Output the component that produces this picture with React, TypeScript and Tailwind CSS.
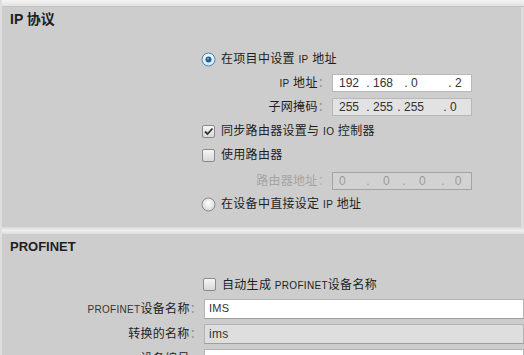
import React from "react";

const font = "font-['Liberation_Sans','Noto_Sans_CJK_SC',sans-serif]";

function Radio({ checked, id }: { checked?: boolean; id: string }) {
    return (
        <svg width="15" height="15" viewBox="0 0 15 15" className="flex-none">
            <defs>
                <radialGradient id={id} cx="50%" cy="40%" r="60%">
                    <stop offset="0%" stopColor="#ffffff" />
                    <stop offset="100%" stopColor={checked ? "#cfe3f3" : "#d6d6d6"} />
                </radialGradient>
            </defs>
            <circle cx="7.5" cy="7.5" r="6.5" fill={`url(#${id})`} stroke={checked ? "#4f86b8" : "#8c8c8c"} strokeWidth="1" />
            {checked && <circle cx="7.5" cy="7.5" r="3" fill="#1f5f9c" />}
            {checked && <circle cx="7" cy="6.8" r="1" fill="#6fa7d8" />}
        </svg>
    );
}

function Check({ checked }: { checked?: boolean }) {
    return (
        <span className="flex-none w-[13px] h-[13px] border border-[#8a8a8a] rounded-[2px] bg-linear-to-b from-[#f6f6f6] to-[#d8d8d8] flex items-center justify-center">
            {checked && (
                <svg width="11" height="11" viewBox="0 0 11 11">
                    <path d="M2 5.5 L4.5 8 L9.5 2.5" stroke="#333" strokeWidth="1.8" fill="none" />
                </svg>
            )}
        </span>
    );
}

function Colon({ dim }: { dim?: boolean }) {
    return <span className={dim ? "text-[#b0b0b0]" : "text-[#8a8a8a]"}>：</span>;
}

function IpField({ parts, widths, tone }: { parts: string[]; widths: string[]; tone: "white" | "gray" | "off" }) {
    const box =
        tone === "white"
            ? "bg-white border-[#b8b8b8] text-[#333]"
            : tone === "gray"
              ? "bg-[#e2e2e2] border-[#b8b8b8] text-[#333]"
              : "bg-[#d2d2d2] border-[#a4a4a4] text-[#9a9a9a]";
    return (
        <div className={`ml-[2px] w-[140px] h-[18px] border ${box} flex items-center pl-[6px] text-[12px] tracking-normal`}>
            {parts.map((p, i) => (
                <span key={i} className={`${widths[i]} whitespace-pre`}>
                    {p}
                </span>
            ))}
        </div>
    );
}

export default function App() {
    return (
        <div className={`${font} relative w-[524px] h-[355px] overflow-hidden bg-[#cdcdcd] text-[#1e1e1e] border-l-2 border-[#dedede] flex flex-col`}>
            {/* top strip */}
            <div className="h-[7px] flex-none bg-linear-to-b from-[#f4f4f4] to-[#e2e2e2] border-b border-[#c4c4c4]" />

            {/* IP protocol */}
            <div className="flex-none h-[220px] border-r-[3px] border-[#dcdcdc]">
                <div className="mt-[4px] ml-[8px] h-[17px] leading-[17px] text-[14px] font-bold">IP 协议</div>

                <div className="mt-[19px] flex flex-col text-[12px] tracking-[0.3px]">
                    <div className="h-[24px] pl-[199px] flex items-center gap-[5px]">
                        <Radio checked id="r1" />
                        <span>在项目中设置 <span className="text-[10px]">IP</span> 地址</span>
                    </div>
                    <div className="h-[24px] flex items-center">
                        <span className="w-[328px] text-right">
                            <span className="text-[10px]">IP</span> 地址<Colon />
                        </span>
                        <IpField tone="white" parts={["192", " . 168", " . 0", " . 2"]} widths={["w-[24px]", "w-[38px]", "w-[44px]", "w-[20px]"]} />
                    </div>
                    <div className="h-[24px] flex items-center">
                        <span className="w-[328px] text-right">
                            子网掩码<Colon />
                        </span>
                        <IpField tone="gray" parts={["255", " . 255", " . 255", " . 0"]} widths={["w-[24px]", "w-[31px]", "w-[46px]", "w-[20px]"]} />
                    </div>
                    <div className="h-[24px] pl-[200px] flex items-center gap-[6px]">
                        <Check checked />
                        <span>同步路由器设置与 <span className="text-[10px]">IO</span> 控制器</span>
                    </div>
                    <div className="h-[24px] pl-[200px] flex items-center gap-[6px]">
                        <Check />
                        <span>使用路由器</span>
                    </div>
                    <div className="h-[28px] flex items-center">
                        <span className="w-[328px] text-right text-[#a4a4a4]">
                            路由器地址<Colon dim />
                        </span>
                        <IpField tone="off" parts={["0", " .    0", " .    0", " .   0"]} widths={["w-[24px]", "w-[36px]", "w-[39px]", "w-[24px]"]} />
                    </div>
                    <div className="h-[18px] pl-[199px] flex items-center gap-[5px]">
                        <Radio id="r2" />
                        <span>在设备中直接设定 <span className="text-[10px]">IP</span> 地址</span>
                    </div>
                </div>
            </div>

            {/* separator */}
            <div className="h-[7px] flex-none bg-linear-to-b from-[#d8d8d8] via-[#eeeeee] to-[#dcdcdc]" />

            {/* PROFINET */}
            <div className="flex-1">
                <div className="mt-[4px] ml-[8px] h-[17px] leading-[17px] text-[13px] font-bold">PROFINET</div>

                <div className="mt-[18px] flex flex-col text-[12px] tracking-[0.3px]">
                    <div className="h-[23px] pl-[201px] flex items-center gap-[6px]">
                        <Check />
                        <span>
                            自动生成 <span className="text-[10px]">PROFINET</span>设备名称
                        </span>
                    </div>
                    <div className="h-[25px] flex items-center">
                        <span className="w-[200px] text-right">
                            <span className="text-[10px] text-[#333]">PROFINET</span>设备名称<Colon />
                        </span>
                        <div className="ml-[2px] flex-1 h-[20px] bg-white border border-[#b4b4b4] border-b-[#9e9e9e] flex items-center pl-[4px] text-[11px] text-[#333]">
                            IMS
                        </div>
                    </div>
                    <div className="h-[25px] flex items-center">
                        <span className="w-[200px] text-right">
                            转换的名称<Colon />
                        </span>
                        <div className="ml-[2px] flex-1 h-[20px] bg-[#dedede] border border-[#b4b4b4] border-b-[#9e9e9e] flex items-center pl-[4px] text-[12px] text-[#333]">
                            ims
                        </div>
                    </div>
                    <div className="h-[25px] flex items-center">
                        <span className="w-[200px] text-right">
                            设备编号<Colon />
                        </span>
                        <div className="ml-[2px] flex-1 h-[20px] bg-white border border-[#b4b4b4]" />
                    </div>
                </div>
            </div>
        </div>
    );
}
